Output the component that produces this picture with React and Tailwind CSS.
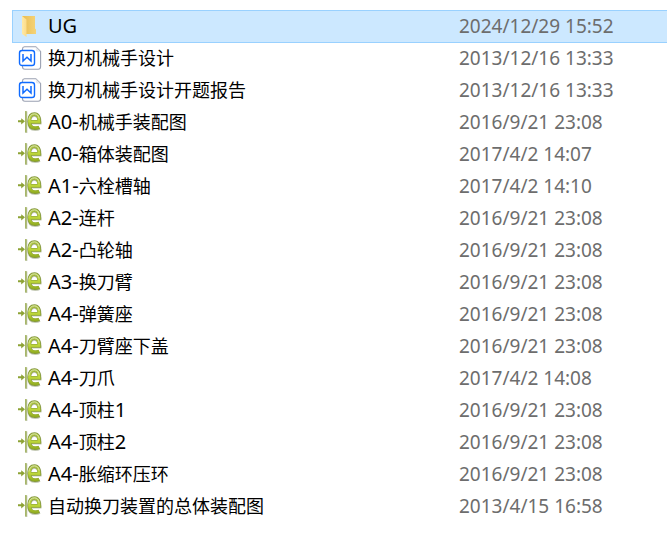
const files = [
  { type: "folder", name: "UG", modified: "2024/12/29 15:52" },
  { type: "doc", name: "换刀机械手设计", modified: "2013/12/16 13:33" },
  { type: "doc", name: "换刀机械手设计开题报告", modified: "2013/12/16 13:33" },
  { type: "drawing", name: "A0-机械手装配图", modified: "2016/9/21 23:08" },
  { type: "drawing", name: "A0-箱体装配图", modified: "2017/4/2 14:07" },
  { type: "drawing", name: "A1-六栓槽轴", modified: "2017/4/2 14:10" },
  { type: "drawing", name: "A2-连杆", modified: "2016/9/21 23:08" },
  { type: "drawing", name: "A2-凸轮轴", modified: "2016/9/21 23:08" },
  { type: "drawing", name: "A3-换刀臂", modified: "2016/9/21 23:08" },
  { type: "drawing", name: "A4-弹簧座", modified: "2016/9/21 23:08" },
  { type: "drawing", name: "A4-刀臂座下盖", modified: "2016/9/21 23:08" },
  { type: "drawing", name: "A4-刀爪", modified: "2017/4/2 14:08" },
  { type: "drawing", name: "A4-顶柱1", modified: "2016/9/21 23:08" },
  { type: "drawing", name: "A4-顶柱2", modified: "2016/9/21 23:08" },
  { type: "drawing", name: "A4-胀缩环压环", modified: "2016/9/21 23:08" },
  { type: "drawing", name: "自动换刀装置的总体装配图", modified: "2013/4/15 16:58" },
];

function FolderIcon() {
  return (
    <svg viewBox="0 0 24 24" className="size-6 shrink-0" aria-hidden="true">
      <defs>
        <linearGradient id="folderBack" x1="0" y1="0" x2="1" y2="0">
          <stop offset="0" stopColor="#e9bd55" />
          <stop offset="1" stopColor="#f5d377" />
        </linearGradient>
        <linearGradient id="folderFront" x1="0" y1="0" x2="1" y2="0">
          <stop offset="0" stopColor="#ffe9a6" />
          <stop offset="1" stopColor="#fbdc8a" />
        </linearGradient>
      </defs>
      <path d="M4 2h13v12.5l1 1V20H7z" fill="url(#folderBack)" />
      <path d="M4 2l4.5 3.5V23L4 20z" fill="url(#folderFront)" />
    </svg>
  );
}

function DocIcon() {
  return (
    <svg viewBox="0 0 24 24" className="size-6 shrink-0" fill="none" aria-hidden="true">
      <path
        d="M6.5 0.7h11.3l4.8 4.8v15.3a2.4 2.4 0 0 1-2.4 2.4H6.9a2.4 2.4 0 0 1-2.4-2.4V2.9A2.2 2.2 0 0 1 6.5.7z"
        fill="#fff"
        stroke="#9ba1b2"
        strokeWidth="1.1"
      />
      <path d="M17.8 0.9v2.4a2.2 2.2 0 0 0 2.2 2.2h2.4z" fill="#e6e8ed" />
      <rect x="1.5" y="4.5" width="15" height="15" rx="2.6" fill="#fff" stroke="#0f6bff" strokeWidth="1.4" />
      <path d="M5 8v7l4-3.8 4 3.8V8" stroke="#0f6bff" strokeWidth="1.5" />
    </svg>
  );
}

function DrawingIcon() {
  return (
    <svg viewBox="0 0 24 24" className="size-6 shrink-0" fill="none" aria-hidden="true">
      <defs>
        <linearGradient id="drawingGreen" x1="0" y1="2" x2="0" y2="20" gradientUnits="userSpaceOnUse">
          <stop offset="0" stopColor="#a3b84a" />
          <stop offset="0.5" stopColor="#bfd83a" />
          <stop offset="1" stopColor="#8aa51c" />
        </linearGradient>
      </defs>
      <path d="M8.4 1.5v21.5" stroke="#cdd1c2" strokeWidth="2" />
      <path d="M7.9 1v21.5" stroke="#8fa43a" strokeWidth="1.2" />
      <path d="M0 10.3h3.2V8.2L7 11.3l-3.8 3.1v-2.1H0z" fill="#8da335" />
      {/* drop shadow under the letter */}
      <path
        d="M11.5 12.5h10c0-4.9-1.5-7.6-5-7.6-3.4 0-5.2 2.9-5.2 7.1 0 4.6 2.2 7.1 5.9 7.1 1.6 0 3.1-.3 4.3-1"
        stroke="#c5cab6"
        strokeWidth="4"
      />
      <path
        d="M11.5 11.9h9.9c0-5-1.5-7.8-4.9-7.8s-5.3 2.8-5.3 7.2c0 4.5 2.1 6.9 5.8 6.9 1.6 0 3-.3 4.2-.9"
        stroke="#83973c"
        strokeWidth="3.6"
      />
      <path
        d="M11.5 11.9h9.6c0-5-1.4-7.6-4.6-7.6s-5.1 2.7-5.1 7c0 4.3 2 6.6 5.6 6.6 1.6 0 3-.3 4-.8"
        stroke="url(#drawingGreen)"
        strokeWidth="2.6"
      />
      <path
        d="M10.9 9.6c.4-3.6 2.4-5.7 5.5-5.7 2.6 0 4.2 1.5 4.7 4.6"
        stroke="#dfe9b4"
        strokeWidth="0.9"
      />
    </svg>
  );
}

const icons = {
  folder: FolderIcon,
  doc: DocIcon,
  drawing: DrawingIcon,
};

// Latin letters and digits run slightly larger than the Chinese glyphs
function FileName({ name }) {
  const parts = name.match(/[\x20-\x7e]+|[^\x20-\x7e]+/g);

  return (
    <span className="text-lg leading-6 text-black">
      {parts.map((part, index) => (
        <span key={index} className={/^[\x20-\x7e]/.test(part) ? "text-xl leading-6" : ""}>
          {part}
        </span>
      ))}
    </span>
  );
}

function FileRow({ file, selected }) {
  const Icon = icons[file.type];
  const cell = selected ? "border-y border-[#99d1ff] bg-[#cce8ff]" : "";

  return (
    <tr aria-selected={selected} className={selected ? "h-[33px]" : "h-8"}>
      <td className={`${cell} ${selected ? "border-l pl-[5px]" : "pl-1.5"} py-0 pr-2 align-top`}>
        <div className="flex h-[30px] items-center gap-1.5">
          <Icon />
          <FileName name={file.name} />
        </div>
      </td>
      <td className={`${cell} p-0 align-top text-[19px] leading-[30px] text-[#6d6d6d]`}>
        {file.modified}
      </td>
    </tr>
  );
}

export default function App() {
  return (
    <main className="min-h-screen overflow-hidden bg-white pt-2.5 pl-3 font-['Noto_Sans','Noto_Sans_CJK_SC',sans-serif]">
      <table className="w-full table-fixed border-separate border-spacing-0 whitespace-nowrap">
        <colgroup>
          <col className="w-[447px]" />
          <col />
        </colgroup>
        <tbody>
          {files.map((file, index) => (
            <FileRow key={file.name} file={file} selected={index === 0} />
          ))}
        </tbody>
      </table>
    </main>
  );
}
